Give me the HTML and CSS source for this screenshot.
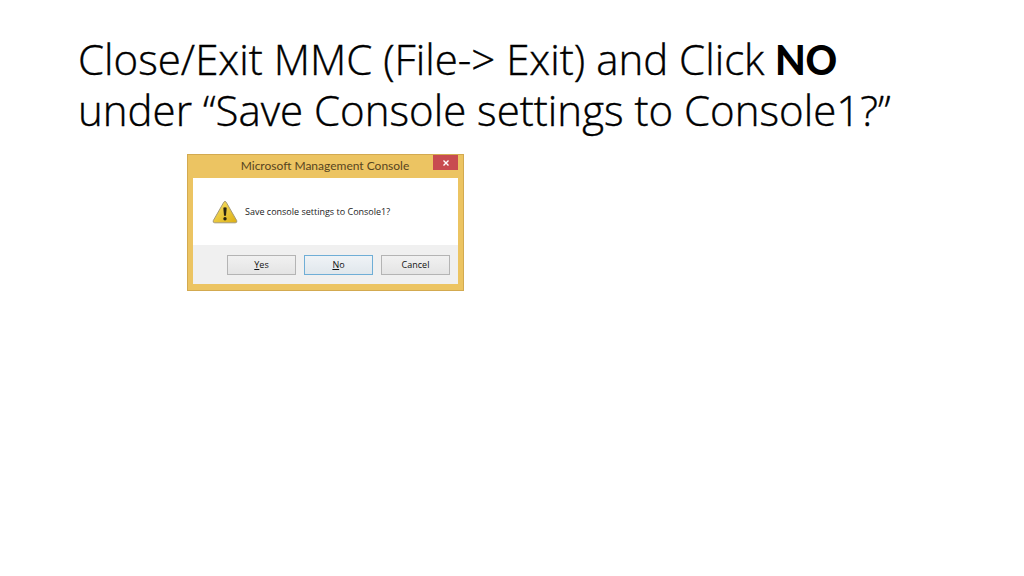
FILE: index.html
```html
<!DOCTYPE html>
<html lang="en">
<head>
<meta charset="utf-8">
<meta name="viewport" content="width=device-width, initial-scale=1">
<title>Close the console</title>
<link rel="stylesheet" href="styles.css">
</head>
<body>
<main class="slide">
  <h1 class="title">Close/Exit MMC (File-&gt; Exit) and Click <strong>NO</strong><br>under “Save Console settings to Console1?”</h1>
  <section class="dialog" role="dialog" aria-labelledby="dialog-title">
    <header class="titlebar">
      <h2 class="caption" id="dialog-title">Microsoft Management Console</h2>
      <button class="close" type="button" aria-label="Close">
        <svg class="cross" viewBox="0 0 8 8" aria-hidden="true"><path d="M1.5 1.5 6.5 6.5M6.5 1.5 1.5 6.5"/></svg>
      </button>
    </header>
    <div class="panel">
      <div class="message">
        <svg class="warning" viewBox="0 0 26 24" aria-hidden="true">
          <defs>
            <linearGradient id="gold" x1="0" y1="0" x2="1" y2="1">
              <stop offset="0" stop-color="#f9e36a"/>
              <stop offset="1" stop-color="#dcae12"/>
            </linearGradient>
          </defs>
          <path class="sign" d="M11.8 2.2Q13 .4 14.2 2.2L24.7 20.6Q25.5 22.6 23.3 22.8H2.7Q.5 22.6 1.3 20.6Z"/>
          <path class="bang" d="M11.3 7.8Q13 6.6 14.7 7.8L14 15.8H12Z"/>
          <circle class="bang" cx="13" cy="18.7" r="1.7"/>
        </svg>
        <p class="question">Save console settings to Console1?</p>
      </div>
      <footer class="actions">
        <button class="button" type="button"><u>Y</u>es</button>
        <button class="button default" type="button"><u>N</u>o</button>
        <button class="button" type="button">Cancel</button>
      </footer>
    </div>
  </section>
</main>
</body>
</html>
```
FILE: styles.css
```css
* { box-sizing: border-box; }
body { margin: 0; background: #fff; color: #000; font-family: "Open Sans", sans-serif; }
.slide { padding: 33px 78px; }
.title { margin: 0 0 19px; font: 300 42px/51px "Open Sans", sans-serif; -webkit-text-stroke: 0.4px #000; }
.title strong { font-family: Carlito, Calibri, sans-serif; font-size: 46px; line-height: 1; font-weight: 700; -webkit-text-stroke: 0; }
.dialog { width: 277px; margin-left: 109px; padding: 0 5px 6px; background: #ecc462; border: 1px solid #d3aa50; }
.titlebar { display: flex; height: 23px; align-items: flex-start; }
.caption { flex: 1; margin: 0; padding-left: 24px; font: 400 12px/22px Lato, sans-serif; text-align: center; color: #57451f; }
.close { display: grid; place-items: center; width: 25px; height: 15px; padding: 0; border: 0; background: #c84c50; }
.cross { width: 8px; height: 8px; fill: none; stroke: #fff; stroke-width: 1.4; }
.panel { background: #fff; }
.message { display: flex; align-items: center; gap: 7px; height: 67px; padding-left: 19px; }
.warning { width: 26px; height: 24px; }
.sign { fill: url(#gold); stroke: #a59a78; }
.bang { fill: #2a2512; }
.question { margin: 0; font-size: 9px; line-height: 12px; color: #222; }
.actions { display: flex; justify-content: flex-end; gap: 8px; padding: 10px 8px 9px; background: #f0f0f0; }
.button { width: 69px; height: 20px; padding: 0; border: 1px solid #b4b4b4; background: linear-gradient(#f1f1f1, #e4e4e4); font: 9px/18px "Open Sans", sans-serif; color: #111; }
.default { border-color: #6faed6; background: linear-gradient(#eff3f6, #e0e7ec); }
```
